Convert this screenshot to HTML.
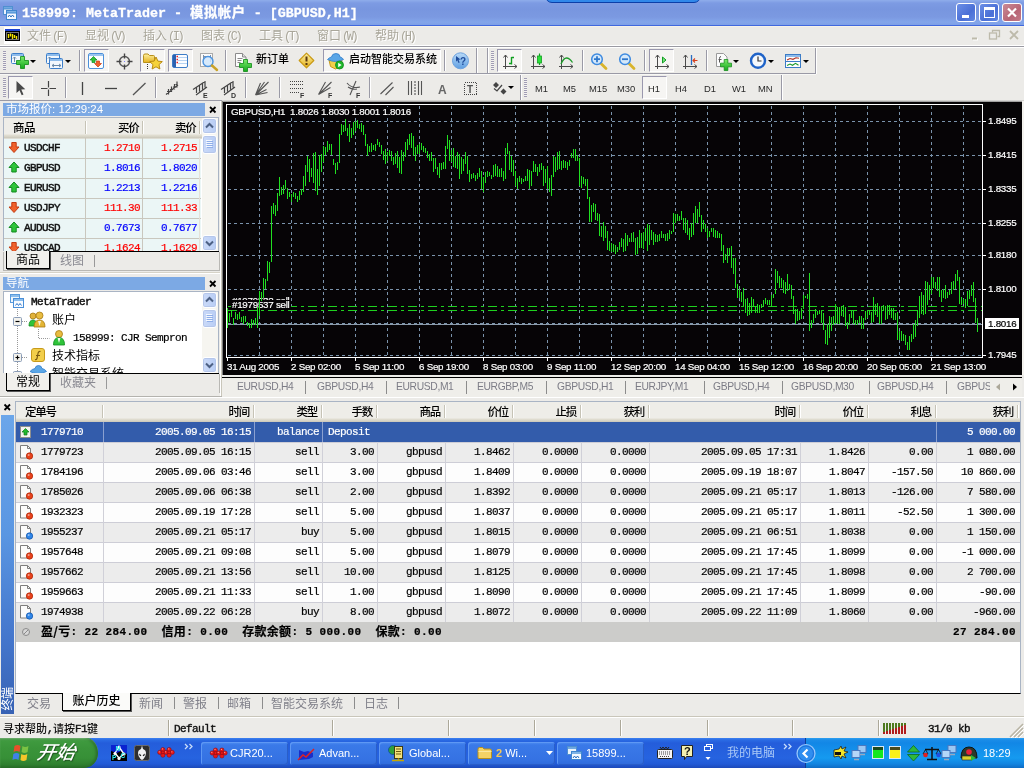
<!DOCTYPE html>
<html lang="zh-CN"><head><meta charset="utf-8"><title>158999: MetaTrader - 模拟帐户 - [GBPUSD,H1]</title>
<style>
*{box-sizing:border-box;margin:0;padding:0}
html,body{width:1024px;height:768px;overflow:hidden;background:#ECEBE8}
body{position:relative;will-change:transform;font-family:"Liberation Sans","Noto Sans CJK SC",sans-serif;font-size:12px;color:#000}
.a{position:absolute}
.mono{font-family:"Liberation Mono","Noto Sans CJK SC",monospace;font-size:11px;letter-spacing:-0.6px;white-space:pre;-webkit-text-stroke:0.2px currentColor}
.cj{font-family:"Liberation Sans","Noto Sans CJK SC",sans-serif;font-size:12px;white-space:pre}
.th{font-family:"Liberation Sans","Noto Sans CJK SC",sans-serif;font-size:11px;white-space:pre}
svg{position:absolute;overflow:visible}
</style></head><body>
<!-- title bar -->
<div class="a" id="titlebar" style="left:0;top:0;width:1024px;height:26px;background:linear-gradient(#8FADEB 0,#7D9BE3 3px,#7896DF 9px,#7B99E1 17px,#83A5EA 22px,#7FA0E6 25px,#4068DE 25px,#4068DE 26px)"></div>
<div class="a" style="left:545px;top:-7px;width:156px;height:10px;background:#3088EA;border:1px solid #0B3FA8;border-radius:0 0 7px 7px"></div>
<svg style="left:2px;top:5px" width="16" height="16" viewBox="0 0 16 16"><rect x="1.5" y="1.5" width="9" height="8" fill="#EAF3FC" stroke="#4F8FD0"/><rect x="1.5" y="1.5" width="9" height="2.5" fill="#6FA8E0" stroke="#4F8FD0"/><rect x="4.5" y="5.5" width="10" height="9" fill="#F4F9FE" stroke="#3F86CF"/><rect x="4.5" y="5.5" width="10" height="2.5" fill="#7DB3E6" stroke="#3F86CF"/><path d="M6 12l1.5-2 1.5 2 1.5-2 1.5 2" fill="none" stroke="#2A6FC0" stroke-width="1"/></svg>
<div class="a" style="left:22px;top:5px;height:17px;line-height:17px;color:#fff;font-family:'Liberation Mono','Noto Sans CJK SC',monospace;font-weight:bold;font-size:13.33px;white-space:pre;-webkit-text-stroke:0.3px #fff">158999: MetaTrader - <span style="letter-spacing:0.6px">模拟帐户</span> - [GBPUSD,H1]</div>
<!-- window buttons -->
<div class="a" style="left:956px;top:3px;width:20px;height:19px;border:1px solid #fff;border-radius:3px;background:linear-gradient(135deg,#6C8FE6,#4A6FD6 60%,#5E85E2)"></div>
<div class="a" style="left:962px;top:15px;width:7px;height:3px;background:#fff"></div>
<div class="a" style="left:979px;top:3px;width:20px;height:19px;border:1px solid #fff;border-radius:3px;background:linear-gradient(135deg,#6C8FE6,#4A6FD6 60%,#5E85E2)"></div>
<div class="a" style="left:984px;top:7px;width:11px;height:11px;border:1px solid #fff;border-top-width:3px"></div>
<div class="a" style="left:1002px;top:3px;width:20px;height:19px;border:1px solid #fff;border-radius:3px;background:linear-gradient(135deg,#C98A96,#B86676 60%,#C27A88)"></div>
<svg style="left:1002px;top:3px" width="20" height="19"><path d="M6 5.5l8 8M14 5.5l-8 8" stroke="#fff" stroke-width="2.2" fill="none"/></svg>
<!-- menu bar -->
<div class="a" id="menubar" style="left:0;top:26px;width:1024px;height:20px;background:#ECEBE8;border-top:1px solid #F6F2E8"></div>
<div class="a" style="left:0;top:45px;width:1024px;height:3px;background:#9A9AA2;border-top:1px solid #fff;border-bottom:1px solid #fff"></div>
<div class="a" style="left:4px;top:27px;width:17px;height:17px;background:#fff"></div><div class="a" style="left:5px;top:29px;width:15px;height:12px;background:#000;border-top:2px solid #1A3FD0"></div>
<svg style="left:5px;top:29px" width="15" height="12"><rect x="1.500" y="3.500" width="12" height="7" fill="none" stroke="#777"/><path d="M3.500 5v4M5.500 4.500v3M7.500 5v5M9.500 6v3M11.500 7v3" stroke="#F5E400" stroke-width="1.4"/></svg>
<div class="a cj menu" style="left:27px;top:28px;line-height:16px;color:#A9A69A;text-shadow:1px 1px 0 #fff">文件<span class="k">(F)</span></div>
<div class="a cj menu" style="left:85px;top:28px;line-height:16px;color:#A9A69A;text-shadow:1px 1px 0 #fff">显视<span class="k">(V)</span></div>
<div class="a cj menu" style="left:143px;top:28px;line-height:16px;color:#A9A69A;text-shadow:1px 1px 0 #fff">插入<span class="k">(I)</span></div>
<div class="a cj menu" style="left:201px;top:28px;line-height:16px;color:#A9A69A;text-shadow:1px 1px 0 #fff">图表<span class="k">(C)</span></div>
<div class="a cj menu" style="left:259px;top:28px;line-height:16px;color:#A9A69A;text-shadow:1px 1px 0 #fff">工具<span class="k">(T)</span></div>
<div class="a cj menu" style="left:317px;top:28px;line-height:16px;color:#A9A69A;text-shadow:1px 1px 0 #fff">窗口<span class="k">(W)</span></div>
<div class="a cj menu" style="left:375px;top:28px;line-height:16px;color:#A9A69A;text-shadow:1px 1px 0 #fff">帮助<span class="k">(H)</span></div>
<style>.menu .k{font-family:"Liberation Mono",monospace;font-size:12px;letter-spacing:-2.4px;margin-left:1px}</style>
<!-- mdi child buttons -->
<svg style="left:970px;top:28px" width="50" height="14"><path d="M2 10.5h5" stroke="#fff" stroke-width="2" transform="translate(1,1)"/><path d="M2 10.5h5" stroke="#BDBAAB" stroke-width="2"/><g fill="none" stroke="#BDBAAB" stroke-width="1.3"><path d="M22.5 4.5v-2h7v6h-2"/><rect x="19.500" y="5" width="7" height="6"/><path d="M40 3l8 8M48 3l-8 8" stroke-width="1.8"/></g></svg>
<!-- toolbars background -->
<style>
.tb{position:absolute;background:#ECEBE8;border-right:1px solid #9A9AA6;border-bottom:1px solid #9A9AA6;box-shadow:1px 0 0 #fff}
.grip{position:absolute;width:3px;background:repeating-linear-gradient(#A09CB4 0,#A09CB4 1px,#F4F3F0 1px,#F4F3F0 2px)}
.sep{position:absolute;width:2px;border-left:1px solid #9A9AA6;border-right:1px solid #fff}
.pr{position:absolute;background:#F6F5F3;border:1px solid #9A98AE;border-right-color:#fff;border-bottom-color:#fff}
.dd{position:absolute;width:0;height:0;border:3px solid transparent;border-top:3px solid #000;border-bottom:0}
.tf{position:absolute;top:83px;font:9.4px "Liberation Sans",sans-serif;color:#2a2a2a;letter-spacing:0}
</style>
<div class="tb" style="left:0;top:48px;width:477px;height:26px"></div>
<div class="tb" style="left:489px;top:48px;width:327px;height:26px"></div>
<div class="tb" style="left:0;top:75px;width:521px;height:26px"></div>
<div class="tb" style="left:522px;top:75px;width:260px;height:26px"></div>
<div class="a" style="left:0;top:73px;width:816px;height:1px;background:#9A9AA6"></div><div class="a" style="left:0;top:74px;width:816px;height:1px;background:#F8F8F6"></div><div class="a" style="left:487px;top:48px;width:1px;height:25px;background:#9A9AA6"></div><div class="a" style="left:488px;top:48px;width:1px;height:25px;background:#fff"></div>
<div class="grip" style="left:3px;top:51px;height:19px"></div>
<div class="grip" style="left:491px;top:51px;height:19px"></div>
<div class="grip" style="left:3px;top:78px;height:19px"></div>
<div class="grip" style="left:524px;top:78px;height:19px"></div>
<!-- toolbar 1 pressed boxes -->
<div class="pr" style="left:84px;top:49px;width:25px;height:23px"></div>
<div class="pr" style="left:140px;top:49px;width:25px;height:23px"></div>
<div class="pr" style="left:168px;top:49px;width:25px;height:23px"></div>
<div class="pr" style="left:323px;top:49px;width:118px;height:23px"></div>
<div class="pr" style="left:497px;top:49px;width:25px;height:23px"></div>
<div class="pr" style="left:649px;top:49px;width:25px;height:23px"></div>
<div class="pr" style="left:8px;top:76px;width:25px;height:23px"></div>
<div class="pr" style="left:642px;top:76px;width:25px;height:23px"></div>
<!-- separators -->
<div class="sep" style="left:79px;top:50px;height:21px"></div>
<div class="sep" style="left:225px;top:50px;height:21px"></div>
<div class="sep" style="left:444px;top:50px;height:21px"></div>
<div class="sep" style="left:582px;top:50px;height:21px"></div>
<div class="sep" style="left:644px;top:50px;height:21px"></div>
<div class="sep" style="left:706px;top:50px;height:21px"></div>
<div class="sep" style="left:65px;top:77px;height:21px"></div>
<div class="sep" style="left:155px;top:77px;height:21px"></div>
<div class="sep" style="left:245px;top:77px;height:21px"></div>
<div class="sep" style="left:279px;top:77px;height:21px"></div>
<div class="sep" style="left:369px;top:77px;height:21px"></div>
<!-- dropdown arrows -->
<div class="dd" style="left:30px;top:60px"></div><div class="dd" style="left:65px;top:60px"></div>
<div class="dd" style="left:733px;top:60px"></div><div class="dd" style="left:768px;top:60px"></div><div class="dd" style="left:803px;top:60px"></div>
<div class="dd" style="left:508px;top:86px"></div>
<!-- toolbar text -->
<div class="a cj" style="left:256px;top:52px;line-height:15px;font-size:11px;font-weight:500;letter-spacing:0px">新订单</div>
<div class="a cj" style="left:349px;top:52px;line-height:15px;font-size:11px;font-weight:500;letter-spacing:0px">启动智能交易系统</div>
<div class="tf" style="left:535px">M1</div><div class="tf" style="left:563px">M5</div><div class="tf" style="left:589px">M15</div><div class="tf" style="left:617px">M30</div><div class="tf" style="left:648px">H1</div><div class="tf" style="left:675px">H4</div><div class="tf" style="left:704px">D1</div><div class="tf" style="left:732px">W1</div><div class="tf" style="left:758px">MN</div>
<svg style="left:0;top:0" width="1024" height="102" viewBox="0 0 1024 102" font-family="Liberation Sans, sans-serif">
<defs>
<linearGradient id="gplus" x1="0" y1="0" x2="0" y2="1"><stop offset="0" stop-color="#7BEA6A"/><stop offset="1" stop-color="#14A81C"/></linearGradient>
<linearGradient id="gblue" x1="0" y1="0" x2="0" y2="1"><stop offset="0" stop-color="#B9DAF8"/><stop offset="1" stop-color="#5F9FE2"/></linearGradient>
<linearGradient id="ggold" x1="0" y1="0" x2="0" y2="1"><stop offset="0" stop-color="#FFF0A0"/><stop offset="1" stop-color="#E3B01E"/></linearGradient>
</defs>
<!-- 1 new chart -->
<rect x="11.500" y="53.500" width="12" height="10" rx="1" fill="#F3F8FD" stroke="#3D7FCB"/><rect x="12" y="54" width="11" height="2" fill="#8EBCEB"/><path d="M14.500 57v5M13 58.500l1.500-1.500 1.500 1.500" stroke="#6C8AA8" fill="none"/>
<g transform="translate(16.5,56.5)"><path d="M4 0h4v4h4v4h-4v4h-4v-4h-4v-4h4z" fill="url(#gplus)" stroke="#0E8A14" stroke-width="0.8"/></g>
<!-- 2 profiles -->
<rect x="46.500" y="53.500" width="13" height="10" rx="1" fill="#F3F8FD" stroke="#3D7FCB"/><rect x="47" y="54" width="12" height="2" fill="#8EBCEB"/><path d="M49.500 57v5M48 58.500l1.500-1.500 1.500 1.500M51 60.500h7M56 59l2 1.500-2 1.500" stroke="#6C8AA8" fill="none"/>
<rect x="49.500" y="58.500" width="13" height="10" rx="1" fill="#F3F8FD" stroke="#3D7FCB"/><rect x="50" y="59" width="12" height="2" fill="#8EBCEB"/><path d="M52 65.500h9M59 64l2 1.500-2 1.500M54 64l-2 1.500 2 1.500" stroke="#6C8AA8" fill="none"/>
<!-- market watch -->
<rect x="88.500" y="53.500" width="15" height="15" rx="1.500" fill="#FDFEFF" stroke="#4C90DA"/><rect x="89" y="54" width="14" height="2" fill="#9CC6F0"/>
<path d="M93.500 56.500l3.500 3.500h-2v2.500h-3v-2.500h-2z" fill="#2FC23A" stroke="#0E8A22" stroke-width="0.7"/><path d="M98 67l-3.500-3.500h2v-2.500h3v2.500h2z" fill="#F0602C" stroke="#C83A10" stroke-width="0.7"/>
<!-- data window crosshair -->
<circle cx="124.500" cy="61.500" r="5" fill="none" stroke="#555" stroke-width="1.4"/><path d="M124.500 53.500v5M124.500 64.500v5M116.500 61.500h5M127.500 61.500h5" stroke="#444" stroke-width="1.4"/><rect x="124" y="61" width="1" height="1" fill="#88F"/>
<!-- navigator folder+star -->
<path d="M143.500 55.500q0-1.500 1.500-1.500h3l1.500 1.500h4q1 0 1 1v6h-11z" fill="url(#ggold)" stroke="#B8901C"/><path d="M147.500 64v6" stroke="#333" stroke-dasharray="1 1"/>
<path d="M156 57l1.900 4.100 4.400.5-3.300 3 .9 4.400-3.900-2.200-3.900 2.200.9-4.400-3.300-3 4.400-.5z" fill="#F6D23A" stroke="#B98A10" stroke-width="1"/>
<!-- terminal -->
<rect x="172.500" y="54.500" width="15" height="13" rx="1.500" fill="#FBFDFF" stroke="#3C7CC6"/><rect x="173" y="55" width="3" height="12" fill="#2C62B0"/><path d="M178 57.500h9M178 60.500h9M178 63.500h9" stroke="#B6D3F2"/><path d="M176.500 56.500h1.500M176.500 59.500h1.500M176.500 62.500h1.500" stroke="#E22" stroke-width="1.300"/>
<!-- tester -->
<rect x="200.500" y="53.500" width="12" height="13" fill="#FAFAFA" stroke="#AAA"/><path d="M203.500 55v9M210.500 55v7M203.500 56.500h7" stroke="#7A8EA6" fill="none"/>
<circle cx="208" cy="61.500" r="5" fill="#CFE5FA" fill-opacity="0.85" stroke="#4C94E0" stroke-width="1.400"/><path d="M212 65.500l5 4.500" stroke="#C9A227" stroke-width="2.400" stroke-linecap="round"/>
<!-- new order -->
<path d="M235.500 53.500h7l3.500 3.500v9.500h-10.500z" fill="#FCFCFC" stroke="#8A8A8A"/><path d="M242.500 53.500v3.500h3.500" fill="#DDD" stroke="#8A8A8A"/><path d="M237.500 58.500h5M237.500 60.500h4M237.500 62.500h3" stroke="#888"/>
<g transform="translate(239.5,59.5)"><path d="M4 0h4v4h4v4h-4v4h-4v-4h-4v-4h4z" fill="url(#gplus)" stroke="#0E8A14" stroke-width="0.8"/></g>
<!-- warning -->
<path d="M306.500 53.200l7.300 7.300-7.300 7.300-7.300-7.300z" fill="url(#ggold)" stroke="#C99A14" stroke-width="1.200" stroke-linejoin="round"/><path d="M306.500 56.500v5" stroke="#5A3A10" stroke-width="2"/><rect x="305.500" y="63" width="2" height="2" fill="#5A3A10"/>
<!-- EA icon -->
<path d="M329 60h13l-1.500 6.500-5 2.500-5-2.500z" fill="#F3CF4A" stroke="#C79A1A"/><path d="M327.500 59.500q1.500-2 4-2.500 .5-3.500 4.500-3.500t4 3.500q2.500.5 3.500 2.500-4 2-8 2t-8-2z" fill="#5AA6E6" stroke="#2F7CCB" stroke-width="0.800"/>
<circle cx="339.500" cy="65" r="4" fill="#1FB72A" stroke="#0C8A18" stroke-width="0.800"/><path d="M338.200 62.800l3.400 2.200-3.400 2.200z" fill="#fff"/>
<!-- help -->
<circle cx="460.500" cy="60.800" r="8" fill="url(#gblue)" stroke="#6FA3DE"/><path d="M456 56l4.500 3.500-2 .3 1.200 2.700-1.200.5-1.200-2.700-1.300 1.400z" fill="#1F4C9A"/><text x="460" y="65" font-size="10" font-weight="bold" fill="#1F4C9A">?</text>
<!-- chart type icons -->
<g transform="translate(503,53)"><g fill="none" stroke="#4A4A4A" stroke-width="1"><path d="M2.500 2v14M0 13.500h14"/><path d="M0.500 4.500l2-2.500 2 2.500M11.500 11.500l2.500 2-2.500 2"/></g></g><path d="M511.500 57v7.500M511.500 57.500h2.500M509 63.500h2.500" stroke="#11A021" stroke-width="1.400" fill="none"/>
<g transform="translate(531,53)"><g fill="none" stroke="#4A4A4A" stroke-width="1"><path d="M2.500 2v14M0 13.500h14"/><path d="M0.500 4.500l2-2.500 2 2.500M11.500 11.500l2.500 2-2.500 2"/></g></g><path d="M539.500 53.500v11.500" stroke="#11A021" stroke-width="1.200"/><rect x="537.500" y="56" width="4" height="7" fill="#2CE03A" stroke="#11A021" stroke-width="0.800"/>
<g transform="translate(559,53)"><g fill="none" stroke="#4A4A4A" stroke-width="1"><path d="M2.500 2v14M0 13.500h14"/><path d="M0.500 4.500l2-2.500 2 2.500M11.500 11.500l2.500 2-2.500 2"/></g></g><path d="M561 64q2.500-6 5.500-6t6 4.500" stroke="#1D9A2A" stroke-width="1.300" fill="none"/>
<!-- zoom in/out -->
<path d="M601 63.500l5 5" stroke="#D9B42C" stroke-width="2.800" stroke-linecap="round"/><circle cx="597" cy="59.200" r="5.300" fill="#D4E8FA" stroke="#3D8AE0" stroke-width="1.500"/><path d="M594 59.200h6M597 56.200v6" stroke="#2F78CC" stroke-width="1.800"/>
<path d="M629 63.500l5 5" stroke="#D9B42C" stroke-width="2.800" stroke-linecap="round"/><circle cx="625" cy="59.200" r="5.300" fill="#D4E8FA" stroke="#3D8AE0" stroke-width="1.500"/><path d="M622 59.200h6" stroke="#2F78CC" stroke-width="1.800"/>
<!-- autoscroll / shift -->
<g transform="translate(655,53)"><g fill="none" stroke="#4A4A4A" stroke-width="1"><path d="M2.500 2v14M0 13.500h14"/><path d="M0.500 4.500l2-2.500 2 2.500M11.500 11.500l2.500 2-2.500 2"/></g></g><path d="M662.500 57l3.500 3-3.500 3z" fill="#7BE080" stroke="#11A021" stroke-width="1"/>
<g transform="translate(683,53)"><g fill="none" stroke="#4A4A4A" stroke-width="1"><path d="M2.500 2v14M0 13.500h14"/><path d="M0.500 4.500l2-2.500 2 2.500M11.500 11.500l2.500 2-2.500 2"/></g></g><path d="M691.500 55v10" stroke="#2A6CC0" stroke-width="1.300"/><path d="M693 60.500h4.500M695 58.500l-2 2 2 2" stroke="#D8401C" stroke-width="1.100" fill="none"/>
<!-- indicators -->
<path d="M716.500 53.500h7l3.500 3.500v9.500h-10.500z" fill="#FCFCFC" stroke="#9A9A9A"/><path d="M721 56.500q-1.500 0-1.500 2v4M718.500 59.500h3" stroke="#555" fill="none"/>
<g transform="translate(720.500,59.500) scale(0.920)"><path d="M4 0h4v4h4v4h-4v4h-4v-4h-4v-4h4z" fill="url(#gplus)" stroke="#0E8A14" stroke-width="0.8"/></g>
<!-- clock -->
<circle cx="758" cy="60.800" r="7" fill="#F4F8FC" stroke="#1F63C8" stroke-width="2.400"/><path d="M758 56.500v4.500h3.500" stroke="#333" stroke-width="1.200" fill="none"/>
<!-- template -->
<rect x="785.500" y="54.500" width="15" height="13" fill="#FDFEFF" stroke="#3C7CC6"/><rect x="786" y="55" width="14" height="2" fill="#8EBCEB"/><path d="M786 61.500h14" stroke="#3C7CC6"/><path d="M787 60l3-1.500 3 .8 3-1.500 3 .4" stroke="#B03020" fill="none" stroke-width="1.100"/><path d="M787 65.500l3-1.500 2.500 1.300 3-2 3 2" stroke="#1D9A2A" fill="none" stroke-width="1.100"/>
<!-- toolbar 2: line studies -->
<path d="M16.500 81v12l3-2.800 2.200 5 1.800-.8-2.200-4.900 4-.2z" fill="#4A4A4A"/>
<path d="M48.500 81v15M41 88.500h15" stroke="#444" stroke-width="1.200" stroke-dasharray="6.500 2 6.500"/>
<path d="M82.500 82v13" stroke="#444" stroke-width="1.300"/>
<path d="M105 88.500h12" stroke="#444" stroke-width="1.300"/>
<path d="M133 95l12.500-12" stroke="#555" stroke-width="1.300"/>
<g stroke="#444" stroke-width="1.200" fill="none">
<path d="M166 94.500l12-9.500M168.500 89v5.500M171.500 86.500v5.500M174.500 84v5.500M177 81.500v6M167 91.500h1.500M170 89.500h1.500M173 87h1.500M175.500 84.500h1.500"/>
<path d="M193 89.500l12-8M196 95l11-8M196.500 87v6M199.500 85v6.500M202.500 83v6.500M205 81v6.500"/>
<path d="M221 89.500l12-8M224 95l11-8M224.500 87v6M227.500 85v6.500M230.500 83v6.500M233 81v6.500"/>
</g>
<text x="203" y="98" font-size="7" font-weight="bold" fill="#333">E</text><text x="231" y="98" font-size="7" font-weight="bold" fill="#333">D</text>
<g stroke="#555" stroke-width="1.100" fill="none">
<path d="M255.500 95l13-13M255.500 95l11-5.500M255.500 95l12-2.500M255.500 95l5-12M255.500 95l9-13"/>
<path d="M318.500 94.500l13-12.500M318.500 94.500l12-7M318.500 94.500l7-12.500"/>
<path d="M347 83q5 6 13 4M350 95l6-14M348 87q4 3 9 2"/>
<path d="M380.500 94l12-11.500M385.500 95l8-8"/>
<path d="M408.500 81v14M411.500 81v14M418.500 81v14M421.500 81v14"/><path d="M415 81v14" stroke-dasharray="2 1"/>
</g>
<path d="M290 81.500h14M290 84.500h14M290 88.500h14M290 92.500h9" stroke="#444" stroke-dasharray="1 1" shape-rendering="crispEdges"/>
<text x="300" y="98" font-size="7" font-weight="bold" fill="#333">F</text><text x="328" y="98" font-size="7" font-weight="bold" fill="#333">F</text><text x="356" y="98" font-size="7" font-weight="bold" fill="#333">F</text>
<text x="438" y="94" font-size="12" font-weight="bold" fill="#666">A</text>
<rect x="464.500" y="82.500" width="12" height="12" fill="none" stroke="#444" stroke-dasharray="1 1" shape-rendering="crispEdges"/><text x="467" y="93" font-size="10" font-weight="bold" fill="#555">T</text>
<path d="M496 82l3 3-3 3-3-3zM503.500 88.500l3 3-3 3-3-3z" fill="#444"/><path d="M494 88.500l3 2.500 5-6" stroke="#444" fill="none" stroke-width="1.200"/>
</svg>
<style>
.cap{position:absolute;height:13px;background:#7CA9E4;color:#fff;font-size:11.5px;line-height:13px;white-space:pre;overflow:hidden}
.cap b{font-weight:normal;font-size:11.5px}
.sb{position:absolute;width:16px;background:#F6F5F0}
.sbb{position:absolute;width:15px;border:1px solid #fff;border-radius:3px;background:linear-gradient(90deg,#CBDAF8,#B8CDF5);box-shadow:0 0 0 1px #B5C6EA inset}
.mwr{position:absolute;left:4px;width:197px;height:20px;background:#EBF6F6;border-bottom:1px solid #C9C7BE}
.mwr .s{position:absolute;left:20px;top:3px;font-weight:normal;-webkit-text-stroke:0.45px #111;color:#111}
.mwr .b{position:absolute;left:82px;width:54px;top:3px;text-align:right}
.mwr .k{position:absolute;left:139px;width:54px;top:3px;text-align:right}
.vs{position:absolute;width:1px;background:#C9C7BE}
.tabact{position:absolute;background:#F1F0EC;border:1px solid #000;border-top:0;box-shadow:1px 1px 0 #555;text-align:center;font-size:12px}
.tabg{position:absolute;color:#8A8A92;font-size:12px;white-space:pre}
</style>
<div class="a" style="left:0;top:101px;width:221px;height:297px;background:#ECEBE8"></div>
<div class="cap" style="left:3px;top:103px;width:202px;padding-left:3px">市场报价<b>: 12:29:24</b></div>
<svg style="left:209px;top:106px" width="8" height="8"><path d="M1 1l5.500 5.500M6.500 1l-5.500 5.500" stroke="#000" stroke-width="1.800"/></svg>
<div class="a" style="left:3px;top:117px;width:216px;height:135px;background:#fff;border:1px solid #A9B4C4;overflow:hidden"></div>
<div class="a" style="left:4px;top:118px;width:198px;height:21px;background:linear-gradient(#EEEDE8 0,#EEEDE8 16px,#E2DFD3 17px,#D4D1C4 19px,#C8C5B8 20px,#F4F4F0 21px)"></div>
<div class="a cj" style="left:13px;top:121px;line-height:14px;font-weight:500;font-size:11.5px;letter-spacing:-0.5px">商品</div>
<div class="a cj" style="left:118px;top:121px;line-height:14px;font-weight:500;font-size:11.5px;letter-spacing:-1.2px">买价</div>
<div class="a cj" style="left:175px;top:121px;line-height:14px;font-weight:500;font-size:11.5px;letter-spacing:-1.2px">卖价</div>
<div class="a" style="left:85px;top:121px;width:2px;height:13px;border-left:1px solid #C6C3B6;border-right:1px solid #fff"></div>
<div class="a" style="left:142px;top:121px;width:2px;height:13px;border-left:1px solid #C6C3B6;border-right:1px solid #fff"></div>
<div class="a" style="left:199px;top:121px;width:2px;height:13px;border-left:1px solid #C6C3B6;border-right:1px solid #fff"></div>
<div class="a" style="left:0;top:139px;width:202px;height:112px;overflow:hidden">
<div class="mwr" style="top:0px"><svg style="left:4px;top:2px" width="12" height="13"><path d="M6 11.500l5-5.500h-2.800v-4.500h-4.400v4.500h-2.800z" fill="#F0622C" stroke="#C23A12" stroke-width="1"/></svg><span class="s mono">USDCHF</span><span class="b mono" style="color:#FF0000">1.2710</span><span class="k mono" style="color:#FF0000">1.2715</span></div>
<div class="mwr" style="top:20px"><svg style="left:4px;top:2px" width="12" height="13"><path d="M6 1l5 5.500h-2.800v4.500h-4.400v-4.500h-2.800z" fill="#2FC43A" stroke="#0F8A1E" stroke-width="1"/></svg><span class="s mono">GBPUSD</span><span class="b mono" style="color:#0000FF">1.8016</span><span class="k mono" style="color:#0000FF">1.8020</span></div>
<div class="mwr" style="top:40px"><svg style="left:4px;top:2px" width="12" height="13"><path d="M6 1l5 5.500h-2.800v4.500h-4.400v-4.500h-2.800z" fill="#2FC43A" stroke="#0F8A1E" stroke-width="1"/></svg><span class="s mono">EURUSD</span><span class="b mono" style="color:#0000FF">1.2213</span><span class="k mono" style="color:#0000FF">1.2216</span></div>
<div class="mwr" style="top:60px"><svg style="left:4px;top:2px" width="12" height="13"><path d="M6 11.500l5-5.500h-2.800v-4.500h-4.400v4.500h-2.800z" fill="#F0622C" stroke="#C23A12" stroke-width="1"/></svg><span class="s mono">USDJPY</span><span class="b mono" style="color:#FF0000">111.30</span><span class="k mono" style="color:#FF0000">111.33</span></div>
<div class="mwr" style="top:80px"><svg style="left:4px;top:2px" width="12" height="13"><path d="M6 1l5 5.500h-2.800v4.500h-4.400v-4.500h-2.800z" fill="#2FC43A" stroke="#0F8A1E" stroke-width="1"/></svg><span class="s mono">AUDUSD</span><span class="b mono" style="color:#0000FF">0.7673</span><span class="k mono" style="color:#0000FF">0.7677</span></div>
<div class="mwr" style="top:100px"><svg style="left:4px;top:2px" width="12" height="13"><path d="M6 11.500l5-5.500h-2.800v-4.500h-4.400v4.500h-2.800z" fill="#F0622C" stroke="#C23A12" stroke-width="1"/></svg><span class="s mono">USDCAD</span><span class="b mono" style="color:#FF0000">1.1624</span><span class="k mono" style="color:#FF0000">1.1629</span></div>
</div>
<div class="vs" style="left:85px;top:138px;height:113px"></div><div class="vs" style="left:142px;top:138px;height:113px"></div><div class="vs" style="left:199px;top:138px;height:113px;background:#E4E2DA"></div>
<div class="sb" style="left:202px;top:118px;height:133px"></div><div class="sbb" style="left:202px;top:118px;height:16px"></div><svg style="left:202px;top:118px" width="15" height="16"><path d="M4 9.500l3.500-3.500 3.500 3.500" stroke="#4D6185" stroke-width="2" fill="none"/></svg><div class="sbb" style="left:202px;top:135px;height:19px"></div><svg style="left:202px;top:140px" width="15" height="9" shape-rendering="crispEdges"><path d="M4 0.500h6M4 2.500h6M4 4.500h6M4 6.500h6" stroke="#F4F8FF"/><path d="M5 1.500h6M5 3.500h6M5 5.500h6M5 7.500h6" stroke="#8FAEE8"/></svg><div class="sbb" style="left:202px;top:235px;height:16px"></div><svg style="left:202px;top:235px" width="15" height="16"><path d="M4 6.500l3.500 3.500 3.500-3.500" stroke="#4D6185" stroke-width="2" fill="none"/></svg>
<div class="a" style="left:3px;top:251px;width:216px;height:20px;background:#ECEBE8"></div>
<div class="a" style="left:49px;top:251px;width:170px;height:1px;background:#000"></div>
<div class="tabact" style="left:6px;top:251px;width:44px;height:18px;line-height:19px">商品</div>
<div class="tabg" style="left:60px;top:253px;line-height:17px">线图</div><div class="a" style="left:94px;top:255px;width:1px;height:12px;background:#999"></div>
<div class="a" style="left:3px;top:252px;width:217px;height:19px;border:1px solid #B9B8B4;border-top:0"></div>
<div class="a" style="left:3px;top:374px;width:217px;height:19px;border:1px solid #B9B8B4;border-top:0"></div>
<div class="a" style="left:0;top:273px;width:221px;height:1px;background:#fff"></div><div class="a" style="left:0;top:272px;width:221px;height:1px;background:#D6D3C8"></div>
<div class="cap" style="left:3px;top:277px;width:202px;padding-left:3px">导航</div>
<svg style="left:209px;top:280px" width="8" height="8"><path d="M1 1l5.500 5.500M6.500 1l-5.500 5.500" stroke="#000" stroke-width="1.800"/></svg>
<div class="a" style="left:3px;top:291px;width:216px;height:83px;background:#fff;border:1px solid #A9B4C4;border-bottom:0"></div>
<svg style="left:0;top:291px" width="202" height="82" viewBox="0 291 202 82"><clipPath id="navclip"><rect x="4" y="292" width="198" height="81"/></clipPath><g clip-path="url(#navclip)">
<path d="M17.500 309v8M17.500 326v27M17.500 362v12M22 321.500h6M22 357.500h6M38.500 329v9.500h11" stroke="#999" stroke-dasharray="1 1" fill="none"/>
<rect x="10.500" y="294.500" width="9" height="8" fill="#EEF6FD" stroke="#5A9BDC"/><rect x="11" y="295" width="8" height="2" fill="#8BBDEC"/><rect x="13.500" y="298.500" width="10" height="9" fill="#F8FBFF" stroke="#4A8FD8"/><rect x="14" y="299" width="9" height="2" fill="#8BBDEC"/><path d="M15.500 305.500l1.500-2 1.500 2 1.500-2 1.500 2" stroke="#2F78CC" fill="none"/>
<rect x="13.500" y="317.500" width="8" height="8" rx="1" fill="#F4F3EE" stroke="#8B9DB8"/><path d="M15.500 321.500h4" stroke="#000" stroke-width="1.200"/>
<rect x="13.500" y="353.500" width="8" height="8" rx="1" fill="#F4F3EE" stroke="#8B9DB8"/><path d="M15.500 357.500h4M17.500 355.500v4" stroke="#000" stroke-width="1.200"/>
<rect x="13.500" y="371.500" width="8" height="8" rx="1" fill="#F4F3EE" stroke="#8B9DB8"/>
<circle cx="33" cy="316" r="3" fill="#E0B23A" stroke="#A87A12" stroke-width="0.800"/><path d="M29 326q0-6 4-6t4 6z" fill="#2FC43A" stroke="#0F8A1E" stroke-width="0.800"/>
<circle cx="39.500" cy="315.500" r="3.500" fill="#E8BC40" stroke="#A87A12" stroke-width="0.800"/><path d="M34 327q0-7 5.500-7t5.500 7z" fill="#E3B535" stroke="#A87A12" stroke-width="0.800"/><path d="M38 321l1.500 5 1.500-5z" fill="#F7F1D8"/>
<circle cx="59" cy="334" r="3.500" fill="#E8BC40" stroke="#A87A12" stroke-width="0.800"/><path d="M53.500 345q0-7.500 5.500-7.500t5.500 7.500z" fill="#2FC43A" stroke="#0F8A1E" stroke-width="0.800"/><path d="M57.500 338l1.500 5 1.500-5z" fill="#F2F7EE"/>
<rect x="31.500" y="348.500" width="13" height="13" rx="2.500" fill="#F2CE4A" stroke="#C79A1A"/><path d="M40.500 351.500q-2-.5-2.500 2l-1 5q-.5 1.500-2 1M36 355.500h4" stroke="#7A5A10" fill="none" stroke-width="1.200"/>
<path d="M30 371.500q2-2.500 5-3 .5-3 3.500-3t3.500 3q3 .5 4.500 3-4 2-8.500 2t-8-2z" fill="#5AA6E6" stroke="#2F7CCB" stroke-width="0.800"/>
</g></svg>
<div class="a mono" style="left:31px;top:296px;-webkit-text-stroke:0.45px #111;color:#111">MetaTrader</div>
<div class="a cj" style="left:52px;top:313px;line-height:14px">账户</div>
<div class="a mono" style="left:73px;top:332px">158999: CJR Sempron</div>
<div class="a cj" style="left:52px;top:349px;line-height:14px">技术指标</div>
<div class="a" style="left:52px;top:367px;width:80px;height:6px;overflow:hidden"><div class="cj" style="line-height:14px">智能交易系统</div></div>
<div class="sb" style="left:202px;top:292px;height:81px"></div><div class="sbb" style="left:202px;top:292px;height:16px"></div><svg style="left:202px;top:292px" width="15" height="16"><path d="M4 9.500l3.500-3.500 3.500 3.500" stroke="#4D6185" stroke-width="2" fill="none"/></svg><div class="sbb" style="left:202px;top:309px;height:19px"></div><svg style="left:202px;top:314px" width="15" height="9" shape-rendering="crispEdges"><path d="M4 0.500h6M4 2.500h6M4 4.500h6M4 6.500h6" stroke="#F4F8FF"/><path d="M5 1.500h6M5 3.500h6M5 5.500h6M5 7.500h6" stroke="#8FAEE8"/></svg><div class="sbb" style="left:202px;top:357px;height:16px"></div><svg style="left:202px;top:357px" width="15" height="16"><path d="M4 6.500l3.500 3.500 3.500-3.500" stroke="#4D6185" stroke-width="2" fill="none"/></svg>
<div class="a" style="left:3px;top:373px;width:216px;height:22px;background:#ECEBE8"></div>
<div class="a" style="left:49px;top:373px;width:170px;height:1px;background:#000"></div>
<div class="tabact" style="left:6px;top:373px;width:44px;height:18px;line-height:19px">常规</div>
<div class="tabg" style="left:60px;top:375px;line-height:17px">收藏夹</div><div class="a" style="left:106px;top:377px;width:1px;height:12px;background:#999"></div>
<div class="a" style="left:220px;top:101px;width:1px;height:297px;background:#fff"></div><div class="a" style="left:221px;top:101px;width:1px;height:297px;background:#C9C6BA"></div>
<div class="a" style="left:222px;top:100px;width:802px;height:2px;background:linear-gradient(#ECEBE8,#8A8A8A)"></div>
<div class="a" style="left:222px;top:102px;width:800px;height:273px;background:#060406"></div>
<div class="a" style="left:222px;top:101px;width:1px;height:275px;background:#7E7E7E"></div>
<div class="a" style="left:1022px;top:101px;width:2px;height:275px;background:#F4F3EF"></div>
<svg style="left:0;top:0" width="1024" height="400" viewBox="0 0 1024 400" shape-rendering="crispEdges" font-family="Liberation Sans, sans-serif" font-size="11"><path d="M228 121.5H982M228 155.5H982M228 189.5H982M228 223.5H982M228 255.5H982M228 289.5H982M228 323.5H982M228 355.5H982" stroke="#7A93AB" stroke-dasharray="3 3" fill="none"/><path d="M259.5 106V356M291.5 106V356M323.5 106V356M355.5 106V356M387.5 106V356M419.5 106V356M451.5 106V356M483.5 106V356M515.5 106V356M547.5 106V356M579.5 106V356M611.5 106V356M643.5 106V356M675.5 106V356M707.5 106V356M739.5 106V356M771.5 106V356M803.5 106V356M835.5 106V356M867.5 106V356M899.5 106V356M931.5 106V356M963.5 106V356" stroke="#7A93AB" stroke-dasharray="3 3" fill="none"/><rect x="229" y="107" width="184" height="11" fill="#060406"/><path d="M227 324.500H983" stroke="#8C9CAC"/><path d="M228 306.500H982M228 310.500H982" stroke="#1FD11F" stroke-dasharray="9 4 3 4" fill="none"/><g font-size="9.8" fill="#fff" stroke="#fff" stroke-width="0.2" letter-spacing="-0.27"><text x="232" y="304">#1979532 sell</text><rect x="231" y="300" width="60" height="9" fill="#060406" stroke="none"/><text x="232" y="308">#1979537 sell</text></g><path d="M227.5 308V328M229.5 313V322M231.5 310V317M233.5 318V325M235.5 312V319M237.5 314V320M239.5 312V319M241.5 317V322M243.5 316V324M245.5 316V322M247.5 322V326M249.5 323V328M251.5 319V328M253.5 320V325M255.5 318V325M257.5 307V328M259.5 291V316M261.5 292V301M263.5 278V298M265.5 279V289M267.5 261V281M269.5 262V273M271.5 206V262M273.5 203V214M275.5 205V216M277.5 193V211M279.5 177V196M281.5 187V195M283.5 185V194M285.5 180V189M287.5 188V199M289.5 192V197M291.5 194V202M293.5 192V197M295.5 193V199M297.5 196V202M299.5 191V200M301.5 189V195M303.5 176V192M305.5 165V186M307.5 156V172M309.5 159V182M311.5 168V177M313.5 153V183M315.5 152V191M317.5 169V195M319.5 155V186M321.5 154V172M323.5 146V162M325.5 147V155M327.5 141V152M329.5 144V150M331.5 144V155M333.5 159V165M335.5 163V174M337.5 162V170M339.5 134V163M341.5 124V135M343.5 125V132M345.5 119V131M347.5 128V136M349.5 124V142M351.5 128V138M353.5 122V135M355.5 121V131M357.5 120V128M359.5 124V129M361.5 123V132M363.5 125V135M365.5 134V146M367.5 144V156M369.5 146V152M371.5 143V152M373.5 145V150M375.5 144V151M377.5 139V145M379.5 142V147M381.5 145V154M383.5 151V160M385.5 149V164M387.5 152V161M389.5 150V156M391.5 151V161M393.5 157V165M395.5 153V164M397.5 151V168M399.5 157V173M401.5 150V174M403.5 152V161M405.5 142V157M407.5 139V150M409.5 134V145M411.5 133V148M413.5 136V156M415.5 147V161M417.5 145V154M419.5 144V154M421.5 143V150M423.5 146V152M425.5 148V153M427.5 151V158M429.5 154V161M431.5 152V161M433.5 158V172M435.5 158V169M437.5 167V175M439.5 163V178M441.5 163V170M443.5 162V169M445.5 146V169M447.5 135V149M449.5 140V161M451.5 150V162M453.5 148V167M455.5 156V168M457.5 152V169M459.5 154V179M461.5 157V174M463.5 159V171M465.5 152V164M467.5 156V174M469.5 170V182M471.5 174V179M473.5 173V178M475.5 175V181M477.5 173V179M479.5 168V177M481.5 171V189M483.5 177V192M485.5 172V183M487.5 171V177M489.5 172V176M491.5 175V179M493.5 165V177M495.5 164V176M497.5 166V177M499.5 169V177M501.5 168V177M503.5 171V181M505.5 148V179M507.5 143V154M509.5 151V170M511.5 156V172M513.5 160V176M515.5 171V186M517.5 178V189M519.5 176V182M521.5 178V184M523.5 179V182M525.5 176V181M527.5 169V181M529.5 170V189M531.5 171V186M533.5 161V172M535.5 164V172M537.5 167V176M539.5 164V172M541.5 163V170M543.5 166V186M545.5 169V183M547.5 166V189M549.5 178V192M551.5 175V196M553.5 156V177M555.5 157V172M557.5 152V170M559.5 151V169M561.5 161V170M563.5 160V168M565.5 161V168M567.5 162V170M569.5 160V166M571.5 153V158M573.5 149V158M575.5 149V161M577.5 155V161M579.5 158V186M581.5 176V188M583.5 177V184M585.5 179V186M587.5 179V199M589.5 197V222M591.5 205V222M593.5 203V212M595.5 204V220M597.5 213V221M599.5 214V236M601.5 226V237M603.5 222V241M605.5 226V238M607.5 231V250M609.5 241V251M611.5 243V252M613.5 244V252M615.5 245V254M617.5 247V252M619.5 242V250M621.5 238V247M623.5 239V252M625.5 233V251M627.5 235V246M629.5 238V242M631.5 233V242M633.5 232V242M635.5 238V255M637.5 237V254M639.5 230V248M641.5 233V248M643.5 232V249M645.5 228V241M647.5 224V251M649.5 225V245M651.5 230V240M653.5 232V245M655.5 234V242M657.5 235V242M659.5 234V241M661.5 231V238M663.5 234V238M665.5 234V241M667.5 233V241M669.5 230V239M671.5 231V234M673.5 213V232M675.5 214V223M677.5 214V221M679.5 216V221M681.5 211V220M683.5 218V230M685.5 218V233M687.5 220V235M689.5 228V240M691.5 223V237M693.5 213V235M695.5 206V223M697.5 209V223M699.5 202V217M701.5 215V232M703.5 220V229M705.5 224V232M707.5 228V238M709.5 231V237M711.5 228V232M713.5 228V237M715.5 230V238M717.5 231V238M719.5 233V238M721.5 234V251M723.5 245V263M725.5 254V260M727.5 248V263M729.5 248V256M731.5 246V268M733.5 258V274M735.5 258V288M737.5 284V298M739.5 289V298M741.5 292V302M743.5 288V306M745.5 299V313M747.5 298V316M749.5 303V315M751.5 297V313M753.5 299V307M755.5 306V313M757.5 304V313M759.5 305V313M761.5 304V308M763.5 300V307M765.5 298V304M767.5 300V305M769.5 300V305M771.5 295V307M773.5 294V298M775.5 269V294M777.5 271V283M779.5 276V288M781.5 278V288M783.5 280V293M785.5 282V294M787.5 274V291M789.5 284V290M791.5 285V299M793.5 296V314M795.5 309V324M797.5 309V321M799.5 311V320M801.5 308V319M803.5 295V309M805.5 296V298M807.5 294V299M809.5 273V331M811.5 320V328M813.5 314V323M815.5 309V318M817.5 311V315M819.5 310V314M821.5 311V323M823.5 313V330M825.5 330V344M827.5 324V345M829.5 316V338M831.5 317V331M833.5 316V325M835.5 304V324M837.5 307V324M839.5 307V324M841.5 306V316M843.5 305V317M845.5 307V326M847.5 322V329M849.5 314V325M851.5 311V318M853.5 311V324M855.5 320V325M857.5 320V325M859.5 316V323M861.5 316V329M863.5 318V329M865.5 311V320M867.5 310V318M869.5 310V315M871.5 312V323M873.5 297V322M875.5 304V315M877.5 303V317M879.5 306V324M881.5 306V324M883.5 305V311M885.5 306V320M887.5 305V319M889.5 305V315M891.5 308V318M893.5 308V320M895.5 313V320M897.5 312V340M899.5 331V340M901.5 331V341M903.5 334V341M905.5 335V345M907.5 342V350M909.5 336V350M911.5 334V342M913.5 324V339M915.5 320V337M917.5 310V326M919.5 296V318M921.5 292V314M923.5 295V315M925.5 281V314M927.5 282V305M929.5 285V300M931.5 277V294M933.5 277V288M935.5 282V289M937.5 277V291M939.5 277V297M941.5 290V302M943.5 289V298M945.5 285V299M947.5 292V298M949.5 290V295M951.5 282V294M953.5 281V290M955.5 274V289M957.5 270V281M959.5 277V304M961.5 297V305M963.5 299V304M965.5 299V308M967.5 291V306M969.5 290V299M971.5 285V296M973.5 282V302M975.5 298V323M977.5 318V332" stroke="#21E021" fill="none"/><path d="M226.500 104V357.500M226 104.500H983M982.500 104V357.500M226 357.500H983" stroke="#fff" fill="none"/><path d="M983 121.5h3M983 155.5h3M983 189.5h3M983 223.5h3M983 255.5h3M983 289.5h3M983 355.5h3" stroke="#fff"/><path d="M227.5 358v3M291.5 358v3M355.5 358v3M419.5 358v3M483.5 358v3M547.5 358v3M611.5 358v3M675.5 358v3M739.5 358v3M803.5 358v3M867.5 358v3M931.5 358v3" stroke="#fff"/></svg>
<style>.ct{position:absolute;color:#fff;font:9.8px "Liberation Sans",sans-serif;white-space:pre;line-height:12px;letter-spacing:-0.27px;-webkit-text-stroke:0.2px currentColor}</style>
<div class="ct" style="left:231px;top:106px">GBPUSD,H1  1.8026 1.8030 1.8001 1.8016</div>
<div class="ct" style="left:988px;top:115px">1.8495</div>
<div class="ct" style="left:988px;top:149px">1.8415</div>
<div class="ct" style="left:988px;top:183px">1.8335</div>
<div class="ct" style="left:988px;top:217px">1.8255</div>
<div class="ct" style="left:988px;top:249px">1.8180</div>
<div class="ct" style="left:988px;top:283px">1.8100</div>
<div class="ct" style="left:988px;top:349px">1.7945</div>
<div class="a" style="left:985px;top:318px;width:34px;height:11px;background:#fff"></div><div class="ct" style="left:988px;top:318px;color:#000">1.8016</div>
<div class="ct" style="left:227px;top:361px">31 Aug 2005</div>
<div class="ct" style="left:291px;top:361px">2 Sep 02:00</div>
<div class="ct" style="left:355px;top:361px">5 Sep 11:00</div>
<div class="ct" style="left:419px;top:361px">6 Sep 19:00</div>
<div class="ct" style="left:483px;top:361px">8 Sep 03:00</div>
<div class="ct" style="left:547px;top:361px">9 Sep 11:00</div>
<div class="ct" style="left:611px;top:361px">12 Sep 20:00</div>
<div class="ct" style="left:675px;top:361px">14 Sep 04:00</div>
<div class="ct" style="left:739px;top:361px">15 Sep 12:00</div>
<div class="ct" style="left:803px;top:361px">16 Sep 20:00</div>
<div class="ct" style="left:867px;top:361px">20 Sep 05:00</div>
<div class="ct" style="left:931px;top:361px">21 Sep 13:00</div>
<div class="a" style="left:222px;top:375px;width:802px;height:2px;background:#ECEBE8"></div>
<div class="a" style="left:222px;top:377px;width:800px;height:1px;background:#000"></div>
<div class="a" style="left:222px;top:378px;width:800px;height:19px;background:#EFEEEA"></div>
<div class="a" style="left:237px;top:380px;font:10.3px 'Liberation Sans',sans-serif;color:#7C7C86;line-height:14px;letter-spacing:-0.35px;white-space:pre">EURUSD,H4</div>
<div class="a" style="left:317px;top:380px;font:10.3px 'Liberation Sans',sans-serif;color:#7C7C86;line-height:14px;letter-spacing:-0.35px;white-space:pre">GBPUSD,H4</div>
<div class="a" style="left:396px;top:380px;font:10.3px 'Liberation Sans',sans-serif;color:#7C7C86;line-height:14px;letter-spacing:-0.35px;white-space:pre">EURUSD,M1</div>
<div class="a" style="left:477px;top:380px;font:10.3px 'Liberation Sans',sans-serif;color:#7C7C86;line-height:14px;letter-spacing:-0.35px;white-space:pre">EURGBP,M5</div>
<div class="a" style="left:557px;top:380px;font:10.3px 'Liberation Sans',sans-serif;color:#7C7C86;line-height:14px;letter-spacing:-0.35px;white-space:pre">GBPUSD,H1</div>
<div class="a" style="left:635px;top:380px;font:10.3px 'Liberation Sans',sans-serif;color:#7C7C86;line-height:14px;letter-spacing:-0.35px;white-space:pre">EURJPY,M1</div>
<div class="a" style="left:713px;top:380px;font:10.3px 'Liberation Sans',sans-serif;color:#7C7C86;line-height:14px;letter-spacing:-0.35px;white-space:pre">GBPUSD,H4</div>
<div class="a" style="left:791px;top:380px;font:10.3px 'Liberation Sans',sans-serif;color:#7C7C86;line-height:14px;letter-spacing:-0.35px;white-space:pre">GBPUSD,M30</div>
<div class="a" style="left:877px;top:380px;font:10.3px 'Liberation Sans',sans-serif;color:#7C7C86;line-height:14px;letter-spacing:-0.35px;white-space:pre">GBPUSD,H4</div>
<div class="a" style="left:957px;top:380px;font:10.3px 'Liberation Sans',sans-serif;color:#7C7C86;line-height:14px;letter-spacing:-0.35px;white-space:pre">GBPUS</div>
<div class="a" style="left:305px;top:381px;width:1px;height:13px;background:#8C8C8C"></div>
<div class="a" style="left:386px;top:381px;width:1px;height:13px;background:#8C8C8C"></div>
<div class="a" style="left:466px;top:381px;width:1px;height:13px;background:#8C8C8C"></div>
<div class="a" style="left:546px;top:381px;width:1px;height:13px;background:#8C8C8C"></div>
<div class="a" style="left:625px;top:381px;width:1px;height:13px;background:#8C8C8C"></div>
<div class="a" style="left:704px;top:381px;width:1px;height:13px;background:#8C8C8C"></div>
<div class="a" style="left:782px;top:381px;width:1px;height:13px;background:#8C8C8C"></div>
<div class="a" style="left:869px;top:381px;width:1px;height:13px;background:#8C8C8C"></div>
<div class="a" style="left:946px;top:381px;width:1px;height:13px;background:#8C8C8C"></div>
<div class="a" style="left:990px;top:378px;width:32px;height:19px;background:#EFEEEA"></div>
<svg style="left:993px;top:381px" width="30" height="14"><path d="M7 2.500v7l-4-3.500z" fill="#ACA899"/><path d="M20 2.500v7l4-3.500z" fill="#000"/></svg>
<style>
.tr{position:absolute;left:16px;width:1004px;height:20px;border-top:1px solid #CDCDD6}
.tc{position:absolute;top:3px;text-align:right}
.hd{position:absolute;top:405px;line-height:14px;font-size:11.5px;font-weight:500;letter-spacing:-1.2px;text-align:right;white-space:pre}
</style>
<div class="a" style="left:0;top:396px;width:222px;height:1px;background:#B4B3AE"></div><div class="a" style="left:0;top:397px;width:1024px;height:1px;background:#fff"></div>
<div class="a" style="left:0;top:398px;width:1024px;height:4px;background:#ECEBE8"></div>
<div class="a" style="left:1px;top:415px;width:13px;height:299px;background:linear-gradient(#6BA6EA 0,#5A96E2 40%,#4476CC 75%,#3762B4 100%)"></div>
<svg style="left:3px;top:403px" width="9" height="9"><path d="M1.500 1.500l5.500 5.500M7 1.500l-5.500 5.500" stroke="#000" stroke-width="1.800"/></svg>
<div class="a" style="left:-5px;top:692px;width:25px;height:14px;color:#fff;font-size:12px;line-height:14px;transform:rotate(-90deg);white-space:pre;text-align:center;letter-spacing:-0.5px">终端</div>
<div class="a" style="left:15px;top:401px;width:1006px;height:293px;background:#fff;border:1px solid #A9B4C4;border-bottom:1px solid #000"></div>
<div class="a" style="left:16px;top:402px;width:1004px;height:20px;background:linear-gradient(#EEEDE8 0,#EEEDE8 16px,#E2DFD3 17px,#D4D1C4 19px,#C8C5B8 20px)"></div>
<div class="hd" style="left:25px;text-align:left;letter-spacing:-1.2px">定单号</div>
<div class="hd" style="left:103px;width:148px">时间 </div>
<div class="hd" style="left:254px;width:65px">类型 </div>
<div class="hd" style="left:322px;width:52px">手数 </div>
<div class="hd" style="left:377px;width:65px">商品 </div>
<div class="hd" style="left:445px;width:65px">价位 </div>
<div class="hd" style="left:513px;width:65px">止损 </div>
<div class="hd" style="left:581px;width:65px">获利 </div>
<div class="hd" style="left:649px;width:148px">时间 </div>
<div class="hd" style="left:800px;width:65px">价位 </div>
<div class="hd" style="left:868px;width:65px">利息 </div>
<div class="hd" style="left:936px;width:79px">获利 </div>
<div class="a" style="left:102px;top:405px;width:2px;height:13px;border-left:1px solid #C6C3B6;border-right:1px solid #fff"></div>
<div class="a" style="left:253px;top:405px;width:2px;height:13px;border-left:1px solid #C6C3B6;border-right:1px solid #fff"></div>
<div class="a" style="left:321px;top:405px;width:2px;height:13px;border-left:1px solid #C6C3B6;border-right:1px solid #fff"></div>
<div class="a" style="left:376px;top:405px;width:2px;height:13px;border-left:1px solid #C6C3B6;border-right:1px solid #fff"></div>
<div class="a" style="left:444px;top:405px;width:2px;height:13px;border-left:1px solid #C6C3B6;border-right:1px solid #fff"></div>
<div class="a" style="left:512px;top:405px;width:2px;height:13px;border-left:1px solid #C6C3B6;border-right:1px solid #fff"></div>
<div class="a" style="left:580px;top:405px;width:2px;height:13px;border-left:1px solid #C6C3B6;border-right:1px solid #fff"></div>
<div class="a" style="left:648px;top:405px;width:2px;height:13px;border-left:1px solid #C6C3B6;border-right:1px solid #fff"></div>
<div class="a" style="left:799px;top:405px;width:2px;height:13px;border-left:1px solid #C6C3B6;border-right:1px solid #fff"></div>
<div class="a" style="left:867px;top:405px;width:2px;height:13px;border-left:1px solid #C6C3B6;border-right:1px solid #fff"></div>
<div class="a" style="left:935px;top:405px;width:2px;height:13px;border-left:1px solid #C6C3B6;border-right:1px solid #fff"></div>
<div class="a" style="left:1017px;top:405px;width:2px;height:13px;border-left:1px solid #C6C3B6;border-right:1px solid #fff"></div>
<div class="tr mono" style="top:422px;background:#335CAB;color:#fff;border-top-color:#335CAB"><svg style="left:3px;top:2px" width="14" height="15"><rect x="1.500" y="1.500" width="10" height="11" fill="#F4F3EE" stroke="#8E8E8E"/><path d="M6.500 3.500l3.500 3.500h-2v3h-3v-3h-2z" fill="#22B82E" stroke="#0E7A18" stroke-width="0.700"/></svg><span class="tc" style="left:25px;text-align:left">1779710</span><span class="tc" style="left:87px;width:148px">2005.09.05 16:15</span><span class="tc" style="left:238px;width:65px">balance</span><span class="tc" style="left:312px;text-align:left">Deposit</span><span class="tc" style="left:920px;width:79px">5 000.00</span></div>
<div class="tr mono" style="top:442px;background:#ECECEC;color:#000"><svg style="left:3px;top:1px" width="16" height="17"><path d="M1.500 1.500h7l3 3v9.500h-10z" fill="#FBFBFB" stroke="#7E7E7E"/><path d="M8.500 1.500v3h3" fill="none" stroke="#7E7E7E"/><circle cx="10.500" cy="12" r="3.200" fill="#E8421C" stroke="#B02A0A" stroke-width="0.800"/><circle cx="9.700" cy="11" r="1" fill="#fff" fill-opacity="0.5"/></svg><span class="tc" style="left:25px;text-align:left">1779723</span><span class="tc" style="left:87px;width:148px">2005.09.05 16:15</span><span class="tc" style="left:238px;width:65px">sell</span><span class="tc" style="left:306px;width:52px">3.00</span><span class="tc" style="left:361px;width:65px">gbpusd</span><span class="tc" style="left:429px;width:65px">1.8462</span><span class="tc" style="left:497px;width:65px">0.0000</span><span class="tc" style="left:565px;width:65px">0.0000</span><span class="tc" style="left:633px;width:148px">2005.09.05 17:31</span><span class="tc" style="left:784px;width:65px">1.8426</span><span class="tc" style="left:852px;width:65px">0.00</span><span class="tc" style="left:920px;width:79px">1 080.00</span></div>
<div class="tr mono" style="top:462px;background:#FDFDFD;color:#000"><svg style="left:3px;top:1px" width="16" height="17"><path d="M1.500 1.500h7l3 3v9.500h-10z" fill="#FBFBFB" stroke="#7E7E7E"/><path d="M8.500 1.500v3h3" fill="none" stroke="#7E7E7E"/><circle cx="10.500" cy="12" r="3.200" fill="#E8421C" stroke="#B02A0A" stroke-width="0.800"/><circle cx="9.700" cy="11" r="1" fill="#fff" fill-opacity="0.5"/></svg><span class="tc" style="left:25px;text-align:left">1784196</span><span class="tc" style="left:87px;width:148px">2005.09.06 03:46</span><span class="tc" style="left:238px;width:65px">sell</span><span class="tc" style="left:306px;width:52px">3.00</span><span class="tc" style="left:361px;width:65px">gbpusd</span><span class="tc" style="left:429px;width:65px">1.8409</span><span class="tc" style="left:497px;width:65px">0.0000</span><span class="tc" style="left:565px;width:65px">0.0000</span><span class="tc" style="left:633px;width:148px">2005.09.19 18:07</span><span class="tc" style="left:784px;width:65px">1.8047</span><span class="tc" style="left:852px;width:65px">-157.50</span><span class="tc" style="left:920px;width:79px">10 860.00</span></div>
<div class="tr mono" style="top:482px;background:#ECECEC;color:#000"><svg style="left:3px;top:1px" width="16" height="17"><path d="M1.500 1.500h7l3 3v9.500h-10z" fill="#FBFBFB" stroke="#7E7E7E"/><path d="M8.500 1.500v3h3" fill="none" stroke="#7E7E7E"/><circle cx="10.500" cy="12" r="3.200" fill="#E8421C" stroke="#B02A0A" stroke-width="0.800"/><circle cx="9.700" cy="11" r="1" fill="#fff" fill-opacity="0.5"/></svg><span class="tc" style="left:25px;text-align:left">1785026</span><span class="tc" style="left:87px;width:148px">2005.09.06 06:38</span><span class="tc" style="left:238px;width:65px">sell</span><span class="tc" style="left:306px;width:52px">2.00</span><span class="tc" style="left:361px;width:65px">gbpusd</span><span class="tc" style="left:429px;width:65px">1.8392</span><span class="tc" style="left:497px;width:65px">0.0000</span><span class="tc" style="left:565px;width:65px">0.0000</span><span class="tc" style="left:633px;width:148px">2005.09.21 05:17</span><span class="tc" style="left:784px;width:65px">1.8013</span><span class="tc" style="left:852px;width:65px">-126.00</span><span class="tc" style="left:920px;width:79px">7 580.00</span></div>
<div class="tr mono" style="top:502px;background:#FDFDFD;color:#000"><svg style="left:3px;top:1px" width="16" height="17"><path d="M1.500 1.500h7l3 3v9.500h-10z" fill="#FBFBFB" stroke="#7E7E7E"/><path d="M8.500 1.500v3h3" fill="none" stroke="#7E7E7E"/><circle cx="10.500" cy="12" r="3.200" fill="#E8421C" stroke="#B02A0A" stroke-width="0.800"/><circle cx="9.700" cy="11" r="1" fill="#fff" fill-opacity="0.5"/></svg><span class="tc" style="left:25px;text-align:left">1932323</span><span class="tc" style="left:87px;width:148px">2005.09.19 17:28</span><span class="tc" style="left:238px;width:65px">sell</span><span class="tc" style="left:306px;width:52px">5.00</span><span class="tc" style="left:361px;width:65px">gbpusd</span><span class="tc" style="left:429px;width:65px">1.8037</span><span class="tc" style="left:497px;width:65px">0.0000</span><span class="tc" style="left:565px;width:65px">0.0000</span><span class="tc" style="left:633px;width:148px">2005.09.21 05:17</span><span class="tc" style="left:784px;width:65px">1.8011</span><span class="tc" style="left:852px;width:65px">-52.50</span><span class="tc" style="left:920px;width:79px">1 300.00</span></div>
<div class="tr mono" style="top:522px;background:#ECECEC;color:#000"><svg style="left:3px;top:1px" width="16" height="17"><path d="M1.500 1.500h7l3 3v9.500h-10z" fill="#FBFBFB" stroke="#7E7E7E"/><path d="M8.500 1.500v3h3" fill="none" stroke="#7E7E7E"/><circle cx="10.500" cy="12" r="3.200" fill="#2F86E8" stroke="#1458B0" stroke-width="0.800"/><circle cx="9.700" cy="11" r="1" fill="#fff" fill-opacity="0.5"/></svg><span class="tc" style="left:25px;text-align:left">1955237</span><span class="tc" style="left:87px;width:148px">2005.09.21 05:17</span><span class="tc" style="left:238px;width:65px">buy</span><span class="tc" style="left:306px;width:52px">5.00</span><span class="tc" style="left:361px;width:65px">gbpusd</span><span class="tc" style="left:429px;width:65px">1.8015</span><span class="tc" style="left:497px;width:65px">0.0000</span><span class="tc" style="left:565px;width:65px">0.0000</span><span class="tc" style="left:633px;width:148px">2005.09.21 06:51</span><span class="tc" style="left:784px;width:65px">1.8038</span><span class="tc" style="left:852px;width:65px">0.00</span><span class="tc" style="left:920px;width:79px">1 150.00</span></div>
<div class="tr mono" style="top:542px;background:#FDFDFD;color:#000"><svg style="left:3px;top:1px" width="16" height="17"><path d="M1.500 1.500h7l3 3v9.500h-10z" fill="#FBFBFB" stroke="#7E7E7E"/><path d="M8.500 1.500v3h3" fill="none" stroke="#7E7E7E"/><circle cx="10.500" cy="12" r="3.200" fill="#E8421C" stroke="#B02A0A" stroke-width="0.800"/><circle cx="9.700" cy="11" r="1" fill="#fff" fill-opacity="0.5"/></svg><span class="tc" style="left:25px;text-align:left">1957648</span><span class="tc" style="left:87px;width:148px">2005.09.21 09:08</span><span class="tc" style="left:238px;width:65px">sell</span><span class="tc" style="left:306px;width:52px">5.00</span><span class="tc" style="left:361px;width:65px">gbpusd</span><span class="tc" style="left:429px;width:65px">1.8079</span><span class="tc" style="left:497px;width:65px">0.0000</span><span class="tc" style="left:565px;width:65px">0.0000</span><span class="tc" style="left:633px;width:148px">2005.09.21 17:45</span><span class="tc" style="left:784px;width:65px">1.8099</span><span class="tc" style="left:852px;width:65px">0.00</span><span class="tc" style="left:920px;width:79px">-1 000.00</span></div>
<div class="tr mono" style="top:562px;background:#ECECEC;color:#000"><svg style="left:3px;top:1px" width="16" height="17"><path d="M1.500 1.500h7l3 3v9.500h-10z" fill="#FBFBFB" stroke="#7E7E7E"/><path d="M8.500 1.500v3h3" fill="none" stroke="#7E7E7E"/><circle cx="10.500" cy="12" r="3.200" fill="#E8421C" stroke="#B02A0A" stroke-width="0.800"/><circle cx="9.700" cy="11" r="1" fill="#fff" fill-opacity="0.5"/></svg><span class="tc" style="left:25px;text-align:left">1957662</span><span class="tc" style="left:87px;width:148px">2005.09.21 13:56</span><span class="tc" style="left:238px;width:65px">sell</span><span class="tc" style="left:306px;width:52px">10.00</span><span class="tc" style="left:361px;width:65px">gbpusd</span><span class="tc" style="left:429px;width:65px">1.8125</span><span class="tc" style="left:497px;width:65px">0.0000</span><span class="tc" style="left:565px;width:65px">0.0000</span><span class="tc" style="left:633px;width:148px">2005.09.21 17:45</span><span class="tc" style="left:784px;width:65px">1.8098</span><span class="tc" style="left:852px;width:65px">0.00</span><span class="tc" style="left:920px;width:79px">2 700.00</span></div>
<div class="tr mono" style="top:582px;background:#FDFDFD;color:#000"><svg style="left:3px;top:1px" width="16" height="17"><path d="M1.500 1.500h7l3 3v9.500h-10z" fill="#FBFBFB" stroke="#7E7E7E"/><path d="M8.500 1.500v3h3" fill="none" stroke="#7E7E7E"/><circle cx="10.500" cy="12" r="3.200" fill="#E8421C" stroke="#B02A0A" stroke-width="0.800"/><circle cx="9.700" cy="11" r="1" fill="#fff" fill-opacity="0.5"/></svg><span class="tc" style="left:25px;text-align:left">1959663</span><span class="tc" style="left:87px;width:148px">2005.09.21 11:33</span><span class="tc" style="left:238px;width:65px">sell</span><span class="tc" style="left:306px;width:52px">1.00</span><span class="tc" style="left:361px;width:65px">gbpusd</span><span class="tc" style="left:429px;width:65px">1.8090</span><span class="tc" style="left:497px;width:65px">0.0000</span><span class="tc" style="left:565px;width:65px">0.0000</span><span class="tc" style="left:633px;width:148px">2005.09.21 17:45</span><span class="tc" style="left:784px;width:65px">1.8099</span><span class="tc" style="left:852px;width:65px">0.00</span><span class="tc" style="left:920px;width:79px">-90.00</span></div>
<div class="tr mono" style="top:602px;background:#ECECEC;color:#000"><svg style="left:3px;top:1px" width="16" height="17"><path d="M1.500 1.500h7l3 3v9.500h-10z" fill="#FBFBFB" stroke="#7E7E7E"/><path d="M8.500 1.500v3h3" fill="none" stroke="#7E7E7E"/><circle cx="10.500" cy="12" r="3.200" fill="#2F86E8" stroke="#1458B0" stroke-width="0.800"/><circle cx="9.700" cy="11" r="1" fill="#fff" fill-opacity="0.5"/></svg><span class="tc" style="left:25px;text-align:left">1974938</span><span class="tc" style="left:87px;width:148px">2005.09.22 06:28</span><span class="tc" style="left:238px;width:65px">buy</span><span class="tc" style="left:306px;width:52px">8.00</span><span class="tc" style="left:361px;width:65px">gbpusd</span><span class="tc" style="left:429px;width:65px">1.8072</span><span class="tc" style="left:497px;width:65px">0.0000</span><span class="tc" style="left:565px;width:65px">0.0000</span><span class="tc" style="left:633px;width:148px">2005.09.22 11:09</span><span class="tc" style="left:784px;width:65px">1.8060</span><span class="tc" style="left:852px;width:65px">0.00</span><span class="tc" style="left:920px;width:79px">-960.00</span></div>
<div class="a" style="left:103px;top:442px;width:1px;height:180px;background:#D0D0D8"></div>
<div class="a" style="left:254px;top:442px;width:1px;height:180px;background:#D0D0D8"></div>
<div class="a" style="left:322px;top:442px;width:1px;height:180px;background:#D0D0D8"></div>
<div class="a" style="left:377px;top:442px;width:1px;height:180px;background:#D0D0D8"></div>
<div class="a" style="left:445px;top:442px;width:1px;height:180px;background:#D0D0D8"></div>
<div class="a" style="left:513px;top:442px;width:1px;height:180px;background:#D0D0D8"></div>
<div class="a" style="left:581px;top:442px;width:1px;height:180px;background:#D0D0D8"></div>
<div class="a" style="left:649px;top:442px;width:1px;height:180px;background:#D0D0D8"></div>
<div class="a" style="left:800px;top:442px;width:1px;height:180px;background:#D0D0D8"></div>
<div class="a" style="left:868px;top:442px;width:1px;height:180px;background:#D0D0D8"></div>
<div class="a" style="left:936px;top:442px;width:1px;height:180px;background:#D0D0D8"></div>
<div class="a" style="left:103px;top:422px;width:1px;height:20px;background:#8AA0D0"></div>
<div class="a" style="left:254px;top:422px;width:1px;height:20px;background:#8AA0D0"></div>
<div class="a" style="left:322px;top:422px;width:1px;height:20px;background:#8AA0D0"></div>
<div class="a" style="left:936px;top:422px;width:1px;height:20px;background:#8AA0D0"></div>
<div class="a" style="left:16px;top:622px;width:1004px;height:20px;background:#CCCCCA"></div>
<svg style="left:21px;top:627px" width="10" height="10"><circle cx="5" cy="5" r="3.500" fill="#D8D8D8" stroke="#8A8A8A"/><path d="M3 7l4-4" stroke="#8A8A8A"/></svg>
<div class="a mono" style="left:41px;top:624px;height:16px;line-height:16px;font-weight:bold;letter-spacing:0.4px"><span class="sc">盈/亏</span>: 22 284.00  <span class="sc">信用</span>: 0.00  <span class="sc">存款余额</span>: 5 000.00  <span class="sc">保款</span>: 0.00</div>
<style>.sc{font-family:"Noto Sans CJK SC",sans-serif;font-size:12px;letter-spacing:0.3px;font-weight:bold;line-height:16px;vertical-align:top;display:inline-block;margin-top:-1px}</style>
<div class="a mono" style="left:900px;width:116px;top:624px;height:16px;line-height:16px;font-weight:bold;letter-spacing:0.4px;text-align:right">27 284.00</div>
<div class="a" style="left:15px;top:694px;width:1px;height:19px;background:#A9B4C4"></div>
<div class="a" style="left:15px;top:694px;width:1009px;height:20px;background:#ECEBE8"></div>
<div class="a" style="left:62px;top:693px;width:69px;height:18px;background:#FBFBF9;border:1px solid #000;border-top:0;box-shadow:1px 1px 0 #555;text-align:center;font-size:12px;line-height:17px;font-weight:500">账户历史</div>
<div class="tabg" style="left:27px;top:696px;line-height:17px;color:#80808A">交易</div><div class="tabg" style="left:139px;top:696px;line-height:17px;color:#80808A">新闻</div><div class="tabg" style="left:183px;top:696px;line-height:17px;color:#80808A">警报</div><div class="tabg" style="left:227px;top:696px;line-height:17px;color:#80808A">邮箱</div><div class="tabg" style="left:271px;top:696px;line-height:17px;color:#80808A">智能交易系统</div><div class="tabg" style="left:364px;top:696px;line-height:17px;color:#80808A">日志</div>
<div class="a" style="left:174px;top:697px;width:1px;height:12px;background:#8C8C8C"></div>
<div class="a" style="left:218px;top:697px;width:1px;height:12px;background:#8C8C8C"></div>
<div class="a" style="left:262px;top:697px;width:1px;height:12px;background:#8C8C8C"></div>
<div class="a" style="left:354px;top:697px;width:1px;height:12px;background:#8C8C8C"></div>
<div class="a" style="left:398px;top:697px;width:1px;height:12px;background:#8C8C8C"></div>
<!-- status bar -->
<div class="a" style="left:0;top:714px;width:1024px;height:24px;background:#ECEBE8"></div>
<div class="a" style="left:0;top:716px;width:1024px;height:1px;background:#C9C6BA"></div>
<div class="a" style="left:0;top:717px;width:1024px;height:1px;background:#fff"></div>
<div class="a sc2" style="left:3px;top:722px">寻求帮助</div><div class="a mono" style="left:47px;top:723px;-webkit-text-stroke:0.4px #111;color:#111">,</div><div class="a sc2" style="left:53px;top:722px">请按</div><div class="a mono" style="left:75px;top:723px;-webkit-text-stroke:0.4px #111;color:#111">F1</div><div class="a sc2" style="left:87px;top:722px">键</div>
<style>.sc2{font-family:"Noto Sans CJK SC",sans-serif;font-size:11px;line-height:12px;letter-spacing:0;font-weight:500;color:#111;white-space:pre}
.ss{position:absolute;top:720px;width:2px;height:16px;border-left:1px solid #ACA899;border-right:1px solid #fff}
.tbtn{position:absolute;top:742px;height:23px;width:87px;border-radius:3px;background:linear-gradient(#4F8EF2 0,#3A79E8 3px,#3572E3 18px,#2F6ADB 23px);box-shadow:inset 1px 1px 0 #5E98F4,inset -1px -1px 0 #2A5EC8;color:#fff;font:11px "Liberation Sans",sans-serif;line-height:22px;white-space:pre}
</style>
<div class="a mono" style="left:174px;top:723px;-webkit-text-stroke:0.4px #111;color:#111">Default</div>
<div class="ss" style="left:168px"></div><div class="ss" style="left:332px"></div><div class="ss" style="left:448px"></div><div class="ss" style="left:534px"></div><div class="ss" style="left:620px"></div><div class="ss" style="left:707px"></div><div class="ss" style="left:792px"></div><div class="ss" style="left:878px"></div>
<svg style="left:883px;top:722px" width="26" height="14" shape-rendering="crispEdges"><path d="M1 1v11M4 1v11M7 1v11M10 1v11M13 1v11M16 1v11M19 1v11M22 1v11" stroke="#4E7A1E" stroke-width="2"/><path d="M1 10v2M4 9v3M7 8v4M10 7v5M13 6v6M16 5v7M19 4v8M22 3v9" stroke="#B01C1C" stroke-width="2"/></svg>
<div class="a mono" style="left:928px;top:723px;-webkit-text-stroke:0.4px #111;color:#111">31/0 kb</div>
<svg style="left:1008px;top:722px" width="16" height="16"><path d="M15 2L2 15M15 6L6 15M15 10L10 15" stroke="#B8B4A4" stroke-width="1.500"/><path d="M16 3L3 16M16 7L7 16M16 11L11 16" stroke="#fff" stroke-width="1"/></svg>
<!-- taskbar -->
<div class="a" style="left:0;top:738px;width:1024px;height:30px;background:linear-gradient(#3C81F0 0,#2A6BE4 2px,#245DDB 5px,#2663E0 20px,#225AD6 26px,#1C49B8 30px)"></div>
<div class="a" style="left:805px;top:738px;width:219px;height:30px;background:linear-gradient(#2FA0F0 0,#1A8CE8 2px,#1287E6 5px,#159AF0 20px,#1284E0 26px,#0E6CC4 30px);border-left:1px solid #0F3C98"></div>
<div class="a" style="left:0;top:738px;width:98px;height:30px;border-radius:0 12px 14px 0/0 15px 15px 0;background:linear-gradient(#5CA85C 0,#3F9A3F 3px,#3A943A 10px,#379037 20px,#2E7E2E 27px,#266E26 30px);box-shadow:inset -2px 0 3px #2A6A2A,inset 0 1px 1px #8FD08F"></div>
<svg style="left:9px;top:742px" width="24" height="22"><g transform="skewX(-8) translate(4,0)"><path d="M2 4q3-2 6 0v6q-3-2-6 0z" fill="#E8502A"/><path d="M10 4q3 2 6 0v6q-3 2-6 0z" fill="#7AC243"/><path d="M2 12q3-2 6 0v6q-3-2-6 0z" fill="#3F82E8"/><path d="M10 12q3 2 6 0v6q-3 2-6 0z" fill="#F4C62A"/></g></svg>
<div class="a" style="left:37px;top:741px;color:#fff;font:italic 500 19px 'Liberation Sans','Noto Sans CJK SC',sans-serif;line-height:24px;letter-spacing:0;text-shadow:1px 1px 1px #1E501E;transform:skewX(-10deg)">开始</div>
<!-- quick launch -->
<svg style="left:111px;top:744px" width="64" height="18" font-family="Liberation Sans,sans-serif" font-weight="bold" font-size="6.500"><rect x="0" y="1" width="16" height="16" fill="#000"/><path d="M0 1h16v9l-6-3-4 2-6-2z" fill="#0A22D0"/><path d="M8 3l-4 6M8 3l5 7M4 9l4 5M13 10l-5 4" stroke="#fff" stroke-width="1.300" fill="none"/><circle cx="8" cy="3" r="1.600" fill="#fff"/><circle cx="4" cy="9.500" r="1.600" fill="#fff"/><circle cx="13" cy="10" r="1.600" fill="#fff"/><circle cx="8" cy="14.500" r="1.600" fill="#fff"/><text x="4.500" y="7" fill="#30F0F0">N</text><text x="1" y="15.500" fill="#30F0F0">P</text><text x="9.500" y="14" fill="#30F0F0">C</text>
<rect x="23.500" y="1.500" width="15" height="15" rx="2" fill="#2E2E2E" stroke="#6A6A6A"/><path d="M31 1.500l1 3.500q3 1 3 4 0 3.500-2.500 6l-1.500 1-1.500-1q-2.500-2.500-2.500-6 0-3 3-4z" fill="#F2F2F2"/><path d="M28.300 9.500l2 1.800-.6.900-1.400-1zM33.700 9.500l-2 1.800.6.900 1.400-1z" fill="#1A1A1A"/>
<g transform="translate(46,3) scale(0.900)"><g fill="#E81818" stroke="#8A0000" stroke-width="0.500"><circle cx="3" cy="6" r="2.300"/><circle cx="6.500" cy="2.800" r="2.300"/><circle cx="6.500" cy="9.200" r="2.300"/><circle cx="10" cy="6" r="2.300"/><circle cx="13.500" cy="2.800" r="2.300"/><circle cx="13.500" cy="9.200" r="2.300"/><circle cx="17" cy="6" r="2.300"/><circle cx="6.500" cy="6" r="1.600"/><circle cx="13.500" cy="6" r="1.600"/></g><g fill="#FF9A8A"><circle cx="2.500" cy="5.300" r="0.700"/><circle cx="6" cy="2.100" r="0.700"/><circle cx="9.500" cy="5.300" r="0.700"/><circle cx="13" cy="2.100" r="0.700"/><circle cx="16.500" cy="5.300" r="0.700"/></g></g></svg>
<svg style="left:184px;top:743px" width="10" height="8"><path d="M1 1l2.500 2.500-2.500 2.500M5.500 1l2.500 2.500-2.500 2.500" stroke="#C8DCFA" stroke-width="1.300" fill="none"/></svg>
<!-- task buttons -->
<div class="tbtn" style="left:201px;padding-left:29px">CJR20...</div>
<svg style="left:209px;top:747px" width="20" height="14"><g transform="translate(0.500,0.500) scale(0.920)"><g fill="#E81818" stroke="#8A0000" stroke-width="0.500"><circle cx="3" cy="6" r="2.300"/><circle cx="6.500" cy="2.800" r="2.300"/><circle cx="6.500" cy="9.200" r="2.300"/><circle cx="10" cy="6" r="2.300"/><circle cx="13.500" cy="2.800" r="2.300"/><circle cx="13.500" cy="9.200" r="2.300"/><circle cx="17" cy="6" r="2.300"/><circle cx="6.500" cy="6" r="1.600"/><circle cx="13.500" cy="6" r="1.600"/></g><g fill="#FF9A8A"><circle cx="2.500" cy="5.300" r="0.700"/><circle cx="6" cy="2.100" r="0.700"/><circle cx="9.500" cy="5.300" r="0.700"/><circle cx="13" cy="2.100" r="0.700"/><circle cx="16.500" cy="5.300" r="0.700"/></g></g></svg>
<div class="tbtn" style="left:290px;padding-left:29px">Advan...</div>
<svg style="left:298px;top:746px" width="18" height="16"><path d="M1 4l5 2 4-1 5 2v4l-4 2-10 1z" fill="#1A2EC8"/><path d="M0 14l5-5 3 2 8-8" stroke="#E02020" stroke-width="1.500" fill="none"/></svg>
<div class="tbtn" style="left:379px;padding-left:30px">Global...</div>
<svg style="left:387px;top:744px" width="20" height="19"><circle cx="6" cy="6" r="4.500" fill="#2FA03A" stroke="#145A9A"/><rect x="7.500" y="2.500" width="8" height="12" fill="#F4E27A" stroke="#3A3A1A"/><path d="M9 5h5M9 7.500h5M9 10h5" stroke="#6A5A10"/><path d="M5 16.500h12M11.500 14.500v2" stroke="#C8A800" stroke-width="1.500"/></svg>
<div class="tbtn" style="left:468px;padding-left:28px"><span style="color:#F4C85A;font-weight:bold">2</span> Wi...</div>
<svg style="left:477px;top:746px" width="16" height="14"><path d="M1 3q0-1.500 1.500-1.500h3l1.500 1.500h6q1.500 0 1.500 1.500v7q0 1-1 1h-11.500q-1 0-1-1z" fill="#F4D265" stroke="#B8901C"/><path d="M1.500 5.500h13" stroke="#FBE8A0"/></svg>
<svg style="left:546px;top:751px" width="7" height="5"><path d="M0 0h7l-3.500 4z" fill="#fff"/></svg>
<div class="tbtn" style="left:557px;padding-left:29px">15899...</div>
<svg style="left:566px;top:745px" width="17" height="16"><rect x="1.500" y="1.500" width="9" height="8" fill="#EAF3FC" stroke="#4F8FD0"/><rect x="2" y="2" width="8" height="2" fill="#6FA8E0"/><rect x="5.500" y="6.500" width="10" height="8" fill="#F4F9FE" stroke="#3F86CF"/><rect x="6" y="7" width="9" height="2" fill="#7DB3E6"/><path d="M7 13l1.500-2 1.500 2 1.500-2 1.500 2" fill="none" stroke="#2A6FC0"/></svg>
<!-- lang bar etc -->
<svg style="left:656px;top:744px" width="62" height="20"><path d="M4 3l1.500 2 1.500-2 1.500 2 1.500-2 1.500 2 1.500-2" stroke="#222" fill="none"/><rect x="1.500" y="5.500" width="15" height="9" rx="1" fill="#F4F4F4" stroke="#222"/><path d="M3 8h12M3 10h12M4 12.500h10" stroke="#444" stroke-dasharray="1 1"/>
<path d="M25.500 1.500h11v11h-6l-2 3v-3h-3z" fill="#F4F0B0" stroke="#222"/><text x="28" y="11" font-family="Liberation Sans,sans-serif" font-weight="bold" font-size="11" fill="#111">?</text>
<rect x="50.500" y="0.500" width="6" height="4" fill="none" stroke="#fff"/><rect x="48.500" y="2.500" width="6" height="4" fill="#245DDB" stroke="#fff"/><path d="M49.500 13h5l-2.500 3z" fill="#fff"/></svg>
<div class="a" style="left:727px;top:745px;color:#A9C8F6;font:12px 'Liberation Sans','Noto Sans CJK SC',sans-serif;line-height:16px;white-space:pre">我的电脑</div>
<svg style="left:783px;top:743px" width="10" height="8"><path d="M1 1l2.500 2.500-2.500 2.500M5.500 1l2.500 2.500-2.500 2.500" stroke="#C8DCFA" stroke-width="1.300" fill="none"/></svg>
<!-- tray -->
<svg style="left:795px;top:742px" width="24" height="24"><circle cx="11" cy="11.500" r="9" fill="#2F8EF0" stroke="#9CC8FA" stroke-width="1.200"/><circle cx="11" cy="11.500" r="7.500" fill="none" stroke="#1566D0" stroke-width="0.800"/><path d="M12.500 7.500l-4 4 4 4" stroke="#fff" stroke-width="2.200" fill="none"/></svg>
<svg style="left:832px;top:744px" width="150" height="20">
<path d="M2 6l5-1 2-3 1 3 4-2-2 4 4 1-4 2 2 4-4-2-1 3-2-3-5 1z" fill="#F4E62A" stroke="#222" stroke-width="0.800"/><rect x="3" y="8" width="6" height="3" fill="#111"/>
<rect x="26" y="1.500" width="8" height="7" fill="#9CC8F4" stroke="#4A78C0"/><rect x="20" y="6.500" width="8" height="7" fill="#B4D6F8" stroke="#4A78C0"/><path d="M22 15.500h5M28 10.500h5" stroke="#9AA8C0" stroke-width="1.500"/>
<rect x="40.500" y="2.500" width="11" height="12" fill="#14E81E" stroke="#D8E8F8"/><rect x="41" y="3" width="10" height="3" fill="#1E4A1E"/>
<rect x="57.500" y="2.500" width="11" height="12" fill="#F8F01A" stroke="#D8E8F8"/><rect x="58" y="3" width="10" height="3" fill="#4A4A1E"/>
<path d="M81.500 1.500l6 6.500h-12zM81.500 17l6-6.500h-12z" fill="#2FB83A" stroke="#0E6A1E" stroke-width="0.800"/>
<path d="M100 3v12M95 15.500h10M93 5.500h14" stroke="#111" stroke-width="1.500"/><path d="M91 10h5l-2.500-4.500zM104 10h5l-2.500-4.500z" fill="none" stroke="#111" stroke-width="0.800"/><circle cx="93.500" cy="11" r="2.300" fill="#E02020"/><circle cx="106.500" cy="11" r="2.300" fill="#2050E0"/>
<rect x="116" y="1.500" width="8" height="7" fill="#9CC8F4" stroke="#4A78C0"/><rect x="110" y="6.500" width="8" height="7" fill="#B4D6F8" stroke="#4A78C0"/><path d="M112 15.500h5M118 10.500h5" stroke="#9AA8C0" stroke-width="1.500"/>
<path d="M129 14q0-11 8-11t8 11z" fill="#2A3A2A" stroke="#111"/><circle cx="137" cy="8" r="2.800" fill="#E8203A"/><path d="M130 12h10v4h-10z" fill="#D8D02A" stroke="#222" stroke-width="0.600"/><path d="M139 11l5 3-5 3z" fill="#2FB83A"/></svg>
<div class="a" style="left:983px;top:745px;color:#fff;font:11px 'Liberation Sans',sans-serif;line-height:16px">18:29</div>
</body></html>
